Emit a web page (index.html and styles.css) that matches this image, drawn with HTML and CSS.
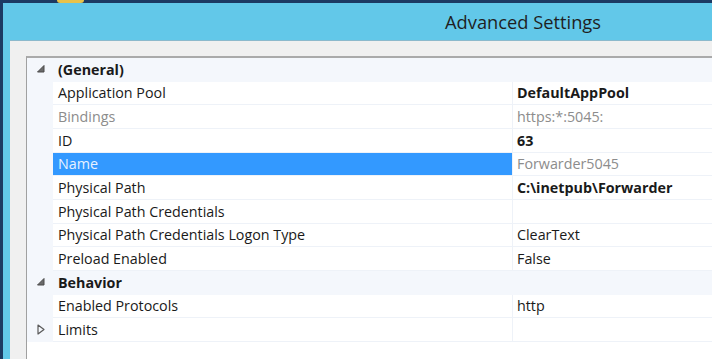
FILE: index.html
```html
<!DOCTYPE html>
<html lang="en">
<head>
    <meta charset="UTF-8">
    <title>Advanced Settings</title>
    <link rel="stylesheet" href="styles.css">
</head>
<body>
    <span class="desk-icon"></span>
    <div class="window">
        <div class="titlebar">Advanced Settings</div>
        <div class="client">
            <div class="grid">
                <div class="row category">
                    <span class="toggle">
                        <svg width="8" height="8" viewBox="0 0 8 8"><polygon points="7,0.5 7,7 0.5,7" fill="#6a6a6a" stroke="#4a4a4a" stroke-width="1" stroke-linejoin="round"/></svg>
                    </span>
                    <span class="label">(General)</span>
                </div>
                <div class="row">
                    <span class="gutter"></span>
                    <span class="name">Application Pool</span>
                    <span class="value bold">DefaultAppPool</span>
                </div>
                <div class="row">
                    <span class="gutter"></span>
                    <span class="name muted">Bindings</span>
                    <span class="value muted">https:*:5045:</span>
                </div>
                <div class="row">
                    <span class="gutter"></span>
                    <span class="name">ID</span>
                    <span class="value bold">63</span>
                </div>
                <div class="row selected">
                    <span class="gutter"></span>
                    <span class="name">Name</span>
                    <span class="value muted">Forwarder5045</span>
                </div>
                <div class="row">
                    <span class="gutter"></span>
                    <span class="name">Physical Path</span>
                    <span class="value bold">C:\inetpub\Forwarder</span>
                </div>
                <div class="row">
                    <span class="gutter"></span>
                    <span class="name">Physical Path Credentials</span>
                    <span class="value"></span>
                </div>
                <div class="row">
                    <span class="gutter"></span>
                    <span class="name">Physical Path Credentials Logon Type</span>
                    <span class="value">ClearText</span>
                </div>
                <div class="row">
                    <span class="gutter"></span>
                    <span class="name">Preload Enabled</span>
                    <span class="value">False</span>
                </div>
                <div class="row category">
                    <span class="toggle">
                        <svg width="8" height="8" viewBox="0 0 8 8"><polygon points="7,0.5 7,7 0.5,7" fill="#6a6a6a" stroke="#4a4a4a" stroke-width="1" stroke-linejoin="round"/></svg>
                    </span>
                    <span class="label">Behavior</span>
                </div>
                <div class="row">
                    <span class="gutter"></span>
                    <span class="name">Enabled Protocols</span>
                    <span class="value">http</span>
                </div>
                <div class="row">
                    <span class="gutter toggle">
                        <svg width="8" height="11" viewBox="0 0 8 11"><polygon points="1,1 7,5.5 1,10" fill="none" stroke="#5a5a5a" stroke-width="1.2" stroke-linejoin="round"/></svg>
                    </span>
                    <span class="name">Limits</span>
                    <span class="value"></span>
                </div>
            </div>
        </div>
    </div>
</body>
</html>
```

FILE: styles.css
```css
/* Page */
body {
    margin: 0;
    height: 100vh;
    overflow: hidden;
    background-color: #1c3a63;
    font-family: 'Open Sans', 'Noto Sans', sans-serif;
    color: #1a1a1a;
}

.desk-icon {
    position: absolute;
    top: 0;
    left: 57px;
    width: 27px;
    height: 3px;
    background-color: #e8c24a;
    border-radius: 0 0 8px 8px;
}

/* Window frame */
.window {
    margin: 3px 0 0 3px;
    height: calc(100vh - 3px);
    padding-left: 7px;
    background-color: #62c8e9;
    display: flex;
    flex-direction: column;
}

.titlebar {
    height: 37px;
    line-height: 37px;
    padding-left: 435px;
    font-size: 18.3px;
    color: #1f1f1f;
}

.client {
    flex: 1;
    background-color: #f0f0f0;
    border-top: 1px solid #8cb9cc;
    padding: 15px 0 0 16px;
    display: flex;
    flex-direction: column;
}

/* Property grid */
.grid {
    flex: 1;
    background-color: #fff;
    border-top: 2px solid #aaaaaa;
    border-left: 1px solid #a0a0a0;
}

.row {
    display: grid;
    grid-template-columns: 26px 459px 1fr;
    height: 23.67px;
    font-size: 14.3px;
}

.row > span {
    display: flex;
    align-items: center;
    box-sizing: border-box;
    border-bottom: 1px solid #eef2f8;
    white-space: nowrap;
}

.row > .gutter,
.category > span {
    border-bottom-color: #f4f7fc;
}

.gutter {
    background-color: #f4f7fc;
}

.toggle {
    justify-content: center;
    padding-left: 2px;
}

.category {
    background-color: #f4f7fc;
}

.category .label {
    grid-column: 2 / 4;
    padding-left: 5px;
    font-weight: bold;
}

.name {
    padding-left: 5px;
}

.value {
    padding-left: 4px;
    border-left: 1px solid #eef2f8;
}

.bold {
    font-weight: bold;
}

.muted {
    color: #8c8c8c;
}

.selected .name {
    background-color: #3399ff;
    color: #e8f1ff;
}
```
